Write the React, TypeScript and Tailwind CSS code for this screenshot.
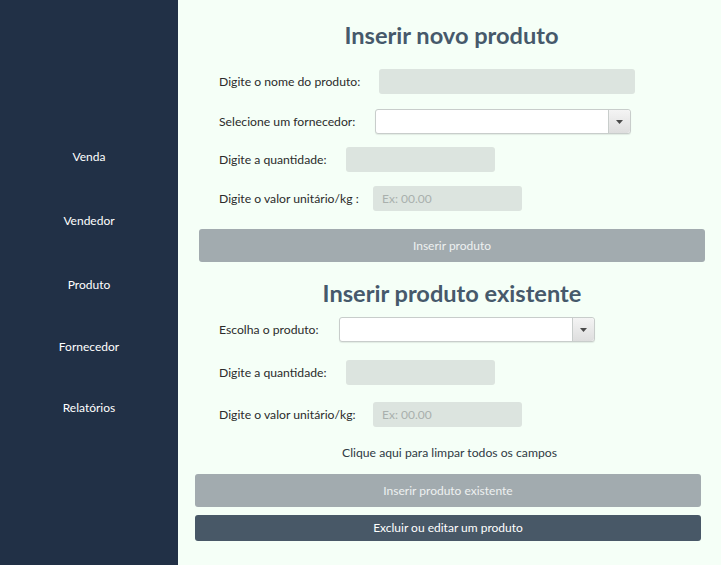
import { ReactNode } from "react";

const menu = ["Venda", "Vendedor", "Produto", "Fornecedor", "Relatórios"];

const Row = ({ label, labelW, children, className }: { label: string; labelW: string; children: ReactNode; className: string }) => (
    <div className={`flex items-center h-[25px] ml-[41px] ${className}`}>
        <span className={`${labelW} shrink-0 pt-[2px] text-[12.2px] text-[#2b2b2b]`}>{label}</span>
        {children}
    </div>
);

const Field = ({ w, placeholder }: { w: string; placeholder?: string }) => (
    <div className={`${w} h-[25px] rounded-[3px] bg-[#dce4df] flex items-center px-[9px] text-[12px] text-[#a9b0ad]`}>
        {placeholder}
    </div>
);

const Combo = () => (
    <div className="w-[256px] h-[25px] rounded-[3px] bg-white border border-[#c8cdcb] shadow-[0_1px_1px_rgba(0,0,0,0.08)] flex">
        <div className="flex-1"></div>
        <div className="w-[22px] border-l border-[#c8cdcb] bg-gradient-to-b from-[#f4f4f4] to-[#dedede] flex items-center justify-center rounded-r-[3px]">
            <svg width="7" height="4" viewBox="0 0 7 4"><path d="M0 0h7L3.5 4z" fill="#4a4a4a" /></svg>
        </div>
    </div>
);

export default function App() {
    return (
        <div className="flex w-[721px] h-[565px] font-['Lato',sans-serif]">
            <aside className="w-[178px] shrink-0 bg-[#213046] flex flex-col items-center pt-[149px]">
                {menu.map((m, i) => (
                    <div key={m} className={`h-[16px] leading-[16px] text-[12px] text-white ${i == 0 ? "" : i == 3 ? "mt-[46px]" : i == 4 ? "mt-[45px]" : "mt-[48px]"}`}>
                        {m}
                    </div>
                ))}
            </aside>
            <main className="flex-1 bg-[#f5fff7] flex flex-col">
                <h1 className="mt-[21px] pl-[4px] h-[28px] leading-[28px] text-center text-[23.6px] font-bold text-[#46596b]">Inserir novo produto</h1>
                <Row label="Digite o nome do produto:" labelW="w-[160px]" className="mt-[20px]">
                    <Field w="w-[256px]" />
                </Row>
                <Row label="Selecione um fornecedor:" labelW="w-[156px]" className="mt-[15px]">
                    <Combo />
                </Row>
                <Row label="Digite a quantidade:" labelW="w-[127px]" className="mt-[13px]">
                    <Field w="w-[149px]" />
                </Row>
                <Row label="Digite o valor unitário/kg :" labelW="w-[154px]" className="mt-[14px]">
                    <Field w="w-[149px]" placeholder="Ex: 00.00" />
                </Row>
                <button className="mt-[18px] ml-[21px] w-[506px] h-[33px] rounded-[3px] bg-[#a2abaf] text-[12px] text-[#eef1f1]">
                    Inserir produto
                </button>
                <h2 className="mt-[17px] pl-[5px] h-[28px] leading-[28px] text-center text-[23.6px] font-bold text-[#46596b]">Inserir produto existente</h2>
                <Row label="Escolha o produto:" labelW="w-[120px]" className="mt-[10px]">
                    <Combo />
                </Row>
                <Row label="Digite a quantidade:" labelW="w-[127px]" className="mt-[18px]">
                    <Field w="w-[149px]" />
                </Row>
                <Row label="Digite o valor unitário/kg:" labelW="w-[154px]" className="mt-[17px]">
                    <Field w="w-[149px]" placeholder="Ex: 00.00" />
                </Row>
                <p className="mt-[18px] h-[16px] leading-[16px] text-center text-[12.2px] text-[#2f3a44]">Clique aqui para limpar todos os campos</p>
                <button className="mt-[13px] ml-[17px] w-[506px] h-[33px] rounded-[3px] bg-[#a2abaf] text-[12px] text-[#eef1f1]">
                    Inserir produto existente
                </button>
                <button className="mt-[8px] ml-[17px] w-[506px] h-[26px] rounded-[3px] bg-[#485867] text-[12px] text-white">
                    Excluir ou editar um produto
                </button>
            </main>
        </div>
    );
}
